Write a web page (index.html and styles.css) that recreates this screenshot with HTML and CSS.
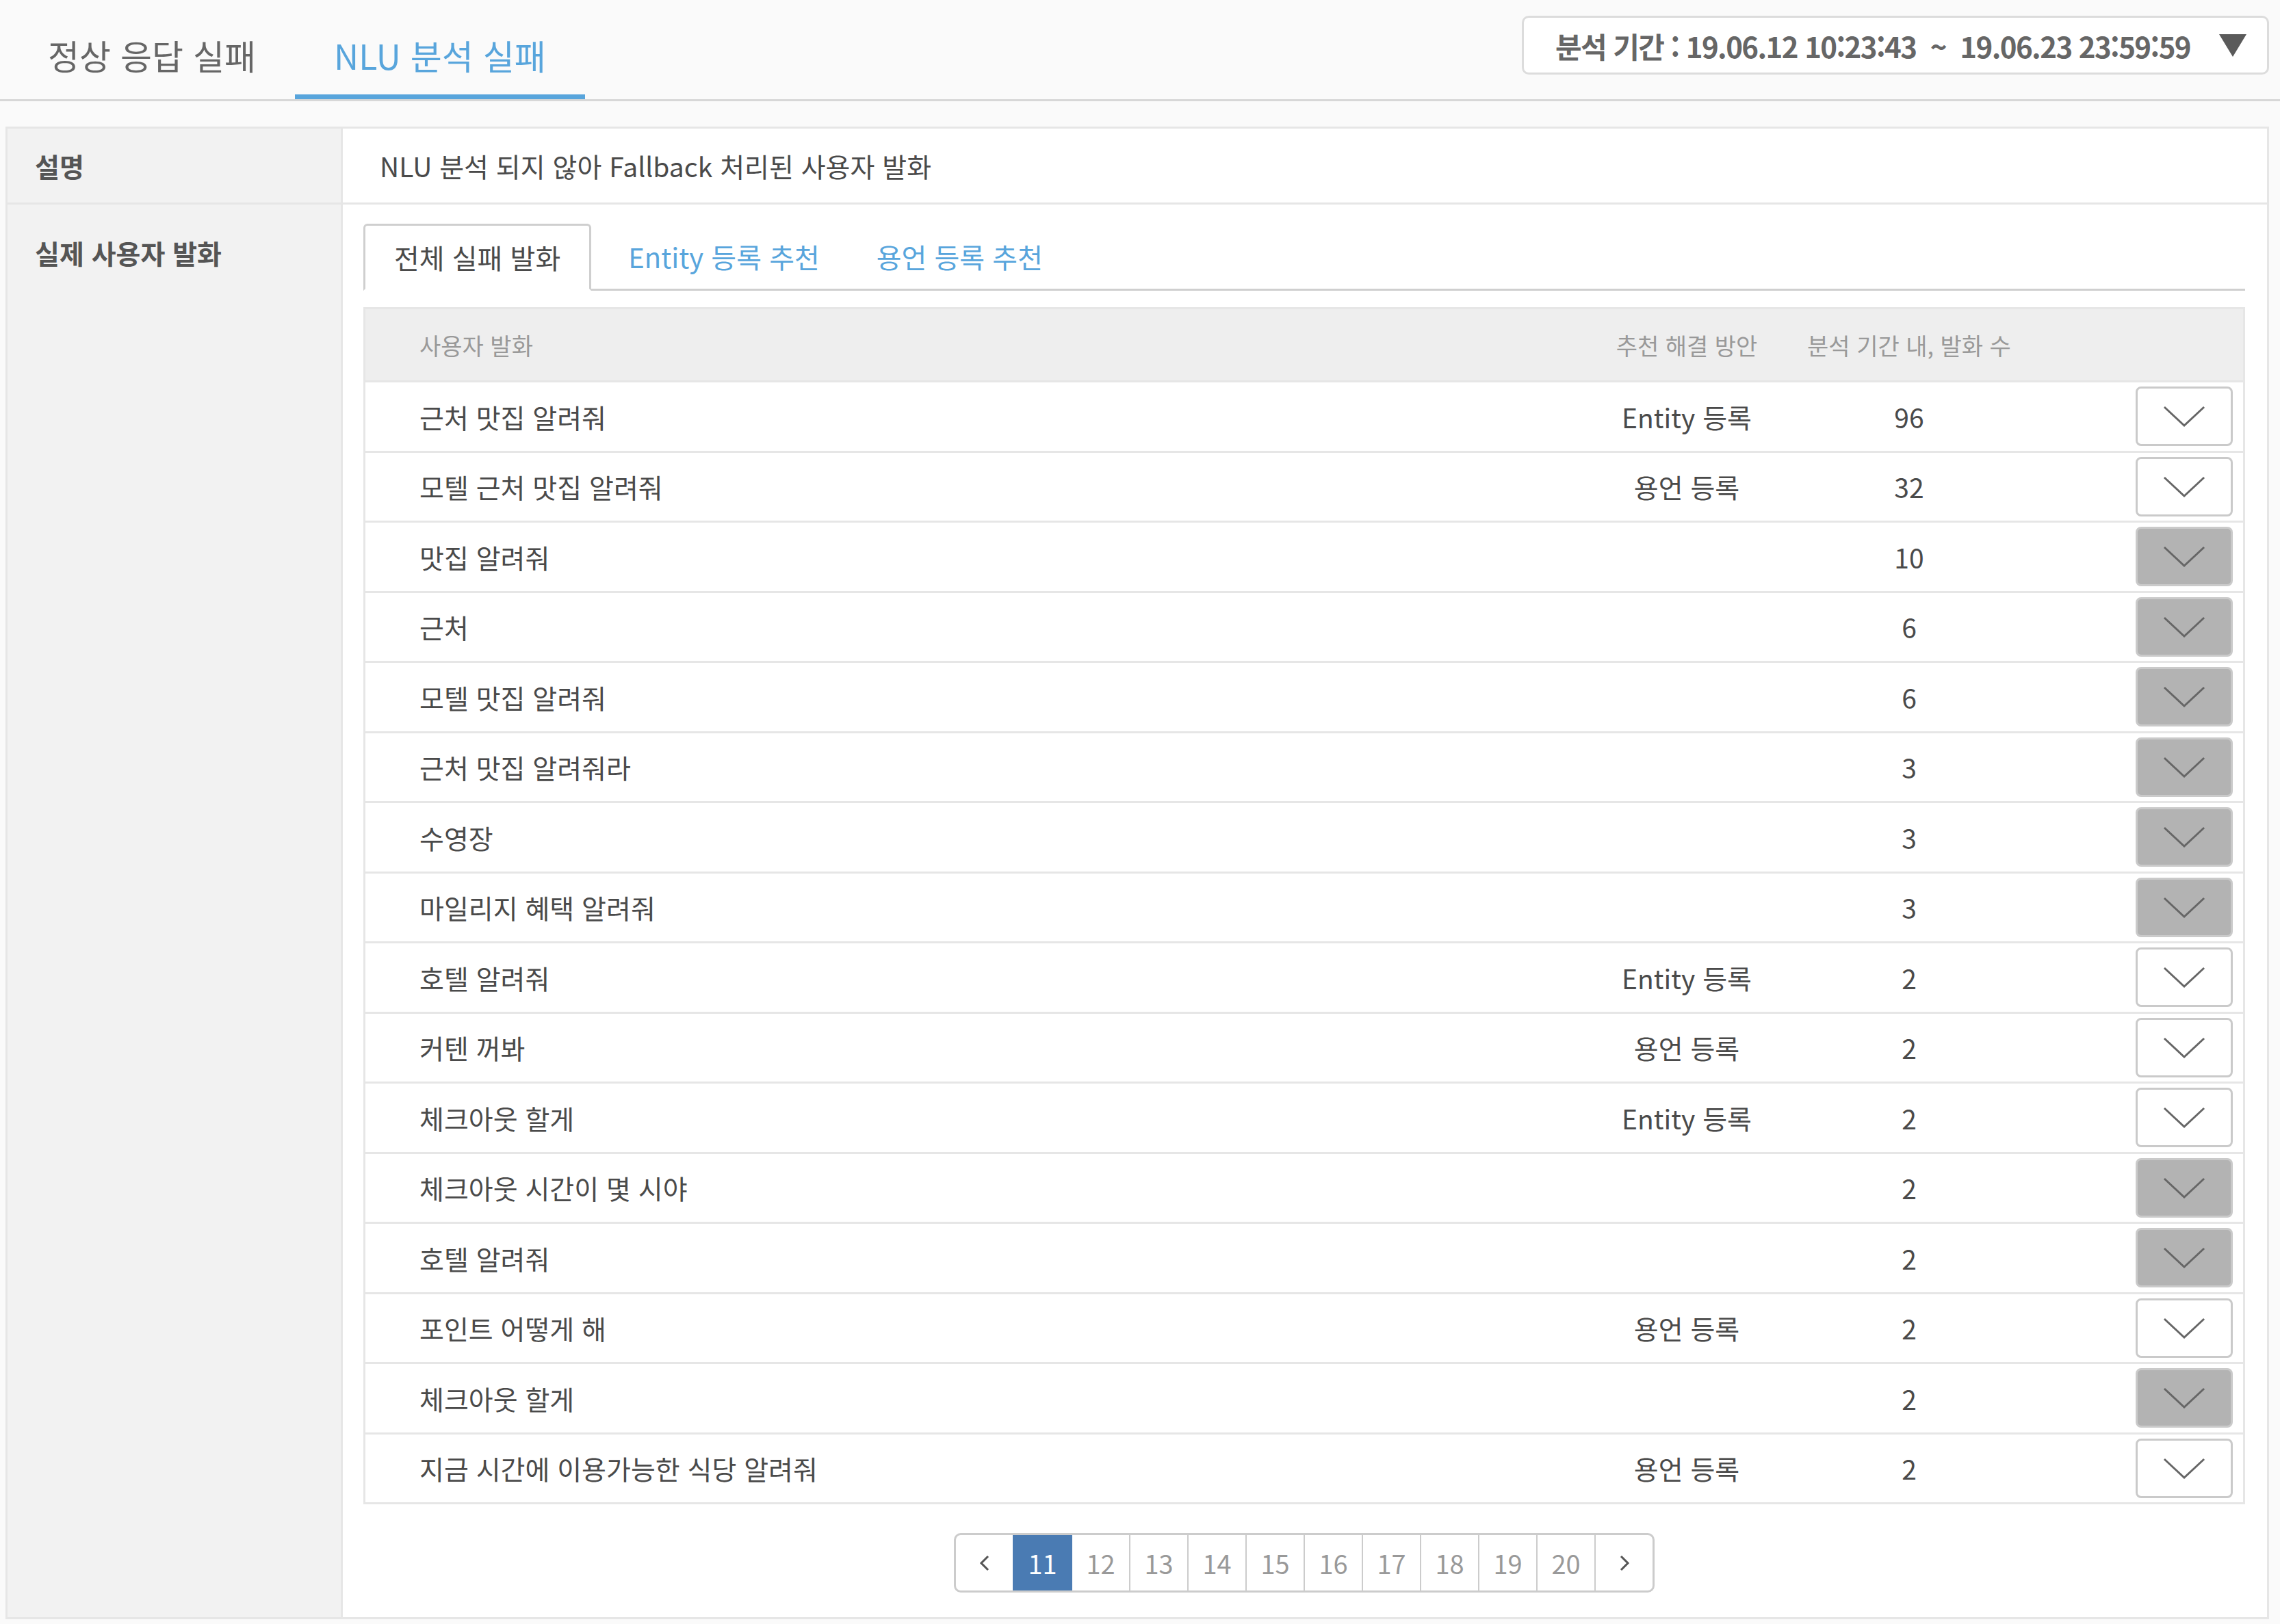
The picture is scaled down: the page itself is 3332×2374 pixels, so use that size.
FILE: index.html
```html
<!DOCTYPE html>
<html lang="ko">
<head>
    <meta charset="UTF-8">
    <title>NLU 분석 실패</title>
    <link rel="stylesheet" href="styles.css">
</head>
<body>
    <div class="top-bar">
        <div class="main-tab">정상 응답 실패</div>
        <div class="main-tab active">NLU 분석 실패</div>
        <div class="period">
            <span class="period-text">분석 기간 : 19.06.12 10:23:43 &nbsp;~&nbsp; 19.06.23 23:59:59</span>
            <span class="period-arrow"></span>
        </div>
    </div>

    <div class="detail">
        <div class="label label-mid">설명</div>
        <div class="value value-mid">NLU 분석 되지 않아 Fallback 처리된 사용자 발화</div>

        <div class="label label-top last">실제 사용자 발화</div>
        <div class="value value-top last">
            <div class="sub-tabs">
                <div class="sub-tab active">전체 실패 발화</div>
                <div class="sub-tab">Entity 등록 추천</div>
                <div class="sub-tab">용언 등록 추천</div>
            </div>

            <div class="grid">
                <div class="grid-row head">
                    <div class="col-text">사용자 발화</div>
                    <div class="col-fix">추천 해결 방안</div>
                    <div class="col-count">분석 기간 내, 발화 수</div>
                    <div class="col-btn"></div>
                </div>

                <div class="grid-row">
                    <div class="col-text">근처 맛집 알려줘</div>
                    <div class="col-fix">Entity 등록</div>
                    <div class="col-count">96</div>
                    <div class="col-btn"><button class="toggle"><svg class="chev" viewBox="0 0 64 32"><polyline points="2,2 32,30 62,2"/></svg></button></div>
                </div>
                <div class="grid-row">
                    <div class="col-text">모텔 근처 맛집 알려줘</div>
                    <div class="col-fix">용언 등록</div>
                    <div class="col-count">32</div>
                    <div class="col-btn"><button class="toggle"><svg class="chev" viewBox="0 0 64 32"><polyline points="2,2 32,30 62,2"/></svg></button></div>
                </div>
                <div class="grid-row">
                    <div class="col-text">맛집 알려줘</div>
                    <div class="col-fix"></div>
                    <div class="col-count">10</div>
                    <div class="col-btn"><button class="toggle off"><svg class="chev" viewBox="0 0 64 32"><polyline points="2,2 32,30 62,2"/></svg></button></div>
                </div>
                <div class="grid-row">
                    <div class="col-text">근처</div>
                    <div class="col-fix"></div>
                    <div class="col-count">6</div>
                    <div class="col-btn"><button class="toggle off"><svg class="chev" viewBox="0 0 64 32"><polyline points="2,2 32,30 62,2"/></svg></button></div>
                </div>
                <div class="grid-row">
                    <div class="col-text">모텔 맛집 알려줘</div>
                    <div class="col-fix"></div>
                    <div class="col-count">6</div>
                    <div class="col-btn"><button class="toggle off"><svg class="chev" viewBox="0 0 64 32"><polyline points="2,2 32,30 62,2"/></svg></button></div>
                </div>
                <div class="grid-row">
                    <div class="col-text">근처 맛집 알려줘라</div>
                    <div class="col-fix"></div>
                    <div class="col-count">3</div>
                    <div class="col-btn"><button class="toggle off"><svg class="chev" viewBox="0 0 64 32"><polyline points="2,2 32,30 62,2"/></svg></button></div>
                </div>
                <div class="grid-row">
                    <div class="col-text">수영장</div>
                    <div class="col-fix"></div>
                    <div class="col-count">3</div>
                    <div class="col-btn"><button class="toggle off"><svg class="chev" viewBox="0 0 64 32"><polyline points="2,2 32,30 62,2"/></svg></button></div>
                </div>
                <div class="grid-row">
                    <div class="col-text">마일리지 혜택 알려줘</div>
                    <div class="col-fix"></div>
                    <div class="col-count">3</div>
                    <div class="col-btn"><button class="toggle off"><svg class="chev" viewBox="0 0 64 32"><polyline points="2,2 32,30 62,2"/></svg></button></div>
                </div>
                <div class="grid-row">
                    <div class="col-text">호텔 알려줘</div>
                    <div class="col-fix">Entity 등록</div>
                    <div class="col-count">2</div>
                    <div class="col-btn"><button class="toggle"><svg class="chev" viewBox="0 0 64 32"><polyline points="2,2 32,30 62,2"/></svg></button></div>
                </div>
                <div class="grid-row">
                    <div class="col-text">커텐 꺼봐</div>
                    <div class="col-fix">용언 등록</div>
                    <div class="col-count">2</div>
                    <div class="col-btn"><button class="toggle"><svg class="chev" viewBox="0 0 64 32"><polyline points="2,2 32,30 62,2"/></svg></button></div>
                </div>
                <div class="grid-row">
                    <div class="col-text">체크아웃 할게</div>
                    <div class="col-fix">Entity 등록</div>
                    <div class="col-count">2</div>
                    <div class="col-btn"><button class="toggle"><svg class="chev" viewBox="0 0 64 32"><polyline points="2,2 32,30 62,2"/></svg></button></div>
                </div>
                <div class="grid-row">
                    <div class="col-text">체크아웃 시간이 몇 시야</div>
                    <div class="col-fix"></div>
                    <div class="col-count">2</div>
                    <div class="col-btn"><button class="toggle off"><svg class="chev" viewBox="0 0 64 32"><polyline points="2,2 32,30 62,2"/></svg></button></div>
                </div>
                <div class="grid-row">
                    <div class="col-text">호텔 알려줘</div>
                    <div class="col-fix"></div>
                    <div class="col-count">2</div>
                    <div class="col-btn"><button class="toggle off"><svg class="chev" viewBox="0 0 64 32"><polyline points="2,2 32,30 62,2"/></svg></button></div>
                </div>
                <div class="grid-row">
                    <div class="col-text">포인트 어떻게 해</div>
                    <div class="col-fix">용언 등록</div>
                    <div class="col-count">2</div>
                    <div class="col-btn"><button class="toggle"><svg class="chev" viewBox="0 0 64 32"><polyline points="2,2 32,30 62,2"/></svg></button></div>
                </div>
                <div class="grid-row">
                    <div class="col-text">체크아웃 할게</div>
                    <div class="col-fix"></div>
                    <div class="col-count">2</div>
                    <div class="col-btn"><button class="toggle off"><svg class="chev" viewBox="0 0 64 32"><polyline points="2,2 32,30 62,2"/></svg></button></div>
                </div>
                <div class="grid-row">
                    <div class="col-text">지금 시간에 이용가능한 식당 알려줘</div>
                    <div class="col-fix">용언 등록</div>
                    <div class="col-count">2</div>
                    <div class="col-btn"><button class="toggle"><svg class="chev" viewBox="0 0 64 32"><polyline points="2,2 32,30 62,2"/></svg></button></div>
                </div>
            </div>

            <div class="pager">
                <span class="page arrow"><svg class="page-chev" viewBox="0 0 16 24"><polyline points="13,2 3,12 13,22"/></svg></span>
                <span class="page current">11</span>
                <span class="page">12</span>
                <span class="page">13</span>
                <span class="page">14</span>
                <span class="page">15</span>
                <span class="page">16</span>
                <span class="page">17</span>
                <span class="page">18</span>
                <span class="page">19</span>
                <span class="page">20</span>
                <span class="page arrow"><svg class="page-chev" viewBox="0 0 16 24"><polyline points="3,2 13,12 3,22"/></svg></span>
            </div>
        </div>
    </div>
</body>
</html>
```

FILE: styles.css
```css
body {
    margin: 0;
    background-color: #fafafa;
    font-family: "Noto Sans CJK KR", "Noto Sans", sans-serif;
    color: #4a4a4a;
}

/* top tabs */
.top-bar {
    display: flex;
    height: 145px;
    border-bottom: 3px solid #d7d7d7;
}

.main-tab {
    display: flex;
    align-items: center;
    padding: 14px 57px 0;
    font-size: 50px;
    color: #666;
}

.main-tab:first-child {
    margin-left: 13px;
}

.main-tab.active {
    color: #58a5dc;
    box-shadow: inset 0 -7px 0 #58a5dc;
}

.period {
    display: flex;
    align-items: center;
    box-sizing: border-box;
    height: 86px;
    margin: 23px 16px 0 auto;
    padding: 0 30px 0 46px;
    background-color: #fff;
    border: 3px solid #dcdcdc;
    border-radius: 10px;
}

.period-text {
    font-size: 42px;
    font-weight: 700;
    color: #666;
    letter-spacing: -1.6px;
}

.period-arrow {
    width: 0;
    height: 0;
    margin-left: 42px;
    border-left: 20px solid transparent;
    border-right: 20px solid transparent;
    border-top: 33px solid #5a5a5a;
}

/* detail table */
.detail {
    display: grid;
    grid-template-columns: 490px 1fr;
    margin: 37px 16px 0 8px;
    border: 3px solid #e6e6e6;
    background-color: #fff;
}

.label {
    background-color: #f2f2f2;
    border-right: 3px solid #e6e6e6;
    border-bottom: 3px solid #e6e6e6;
    padding-left: 40px;
    font-size: 39px;
    font-weight: 700;
    color: #555;
}

.value {
    border-bottom: 3px solid #e6e6e6;
    font-size: 39px;
    color: #4a4a4a;
}

.label.last,
.value.last {
    border-bottom: none;
}

.label-mid,
.value-mid {
    display: flex;
    align-items: center;
    height: 108px;
}

.value-mid {
    padding-left: 54px;
}

.label-top {
    padding-top: 47px;
    line-height: 46px;
}

.value-top {
    padding: 28px 32px 36px 30px;
}

/* sub tabs */
.sub-tabs {
    display: flex;
    gap: 25px;
    border-bottom: 3px solid #cfcfcf;
}

.sub-tab {
    display: flex;
    align-items: center;
    height: 95px;
    padding: 0 29px;
    font-size: 40px;
    color: #58a5dc;
}

.sub-tab.active {
    color: #4a4a4a;
    background-color: #fff;
    border: 3px solid #cfcfcf;
    border-bottom: 3px solid #fff;
    border-radius: 6px 6px 0 0;
    margin-bottom: -3px;
    height: 92px;
    padding: 0 42px;
}

/* list grid */
.grid {
    margin-top: 24px;
    border: 3px solid #e6e6e6;
}

.grid-row {
    display: grid;
    grid-template-columns: 1fr 260px 390px 293px;
    align-items: center;
    height: 99.5px;
    border-bottom: 3px solid #e6e6e6;
    font-size: 39px;
    color: #4a4a4a;
}

.grid-row:last-child {
    border-bottom: none;
}

.grid-row.head {
    height: 104px;
    background-color: #eee;
    font-size: 34px;
    color: #999;
}

.col-text {
    padding-left: 79px;
}

.col-fix,
.col-count {
    text-align: center;
}

.col-btn {
    display: flex;
    justify-content: flex-end;
    padding-right: 15px;
}

.toggle {
    display: flex;
    align-items: center;
    justify-content: center;
    width: 142px;
    height: 87px;
    padding: 0;
    background-color: #fff;
    border: 3px solid #cacaca;
    border-radius: 8px;
    cursor: pointer;
}

.toggle.off {
    background-color: #b3b3b3;
}

.chev {
    width: 62px;
    height: 31px;
}

.chev polyline {
    fill: none;
    stroke: #666;
    stroke-width: 3;
}

/* pagination */
.pager {
    display: flex;
    width: max-content;
    margin: 42px auto 0;
    border: 3px solid #cccccc;
    border-radius: 10px;
    overflow: hidden;
    background-color: #fff;
}

.page {
    display: flex;
    align-items: center;
    justify-content: center;
    width: 83px;
    height: 81px;
    border-left: 2px solid #cccccc;
    font-size: 38px;
    color: #999;
}

.page:first-child {
    border-left: none;
}

.page.current {
    background-color: #4a7bb3;
    color: #fff;
    border-left-color: #4a7bb3;
}

.page.current + .page {
    border-left-color: #4a7bb3;
}

.page-chev {
    width: 16px;
    height: 24px;
}

.page-chev polyline {
    fill: none;
    stroke: #555;
    stroke-width: 3;
}
```
